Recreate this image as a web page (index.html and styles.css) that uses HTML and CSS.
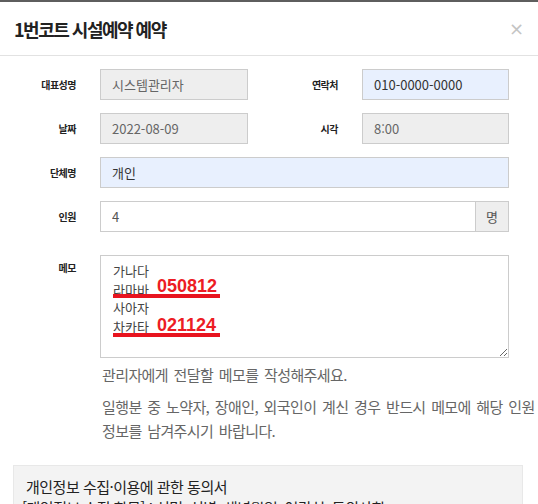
FILE: index.html
```html
<!DOCTYPE html>
<html lang="ko">
<head>
  <meta charset="UTF-8">
  <meta name="viewport" content="width=device-width, initial-scale=1.0">
  <title>1번코트 시설예약 예약</title>
  <link rel="stylesheet" href="styles.css">
</head>
<body>
  <div class="modal">
    <div class="modal-header">
      <h4 class="modal-title">1번코트 시설예약 예약</h4>
      <button class="close" type="button">&times;</button>
    </div>

    <div class="modal-body">
      <form class="form">
        <div class="row">
          <label class="label">대표성명</label>
          <input class="field" type="text" value="시스템관리자" readonly>
          <label class="label">연락처</label>
          <input class="field filled" type="text" value="010-0000-0000">
        </div>
        <div class="row">
          <label class="label">날짜</label>
          <input class="field" type="text" value="2022-08-09" readonly>
          <label class="label">시각</label>
          <input class="field" type="text" value="8:00" readonly>
        </div>
        <div class="row">
          <label class="label">단체명</label>
          <input class="field filled wide" type="text" value="개인">
        </div>
        <div class="row">
          <label class="label">인원</label>
          <div class="input-group wide">
            <input class="field" type="text" value="4">
            <span class="addon">명</span>
          </div>
        </div>
        <div class="row memo-row">
          <label class="label">메모</label>
          <div class="wide">
            <div class="memo-box">
              <textarea class="field memo">가나다
라마바
사아자
차카타</textarea>
              <!-- 빨간 표시 -->
              <span class="mark mark-1">050812</span>
              <span class="mark mark-2">021124</span>
            </div>
            <p class="help">관리자에게 전달할 메모를 작성해주세요.</p>
            <p class="help">일행분 중 노약자, 장애인, 외국인이 계신 경우 반드시 메모에 해당 인원 정보를 남겨주시기 바랍니다.</p>
          </div>
        </div>
      </form>

      <div class="agree">
        <p class="agree-title">개인정보 수집·이용에 관한 동의서</p>
        <p>[개인정보 수집 항목] : 성명, 성별, 생년월일, 연락처, 동의사항</p>
      </div>
    </div>
  </div>
</body>
</html>
```

FILE: styles.css
```css
body {
  margin: 0;
  font-family: "Noto Sans CJK KR", "Noto Sans", sans-serif;
  color: #333;
  background: #fff;
}
.modal {
  border-top: 2px solid #5e5e5e;
  overflow: hidden;
  height: 502px;
}
.modal-header {
  display: flex;
  align-items: center;
  justify-content: space-between;
  height: 53px;
  padding: 0 14px;
  border-bottom: 1px solid #e2e2e2;
}
.modal-title {
  margin: 0;
  font-size: 18px;
  font-weight: bold;
  letter-spacing: -1.5px;
  color: #222;
}
.close {
  border: none;
  background: none;
  padding: 0;
  font-size: 18px;
  font-family: "DejaVu Sans", sans-serif;
  color: #c4c4c4;
  cursor: pointer;
}
.modal-body {
  padding: 13px 15px 0 13px;
}
.form {
  padding-right: 14px;
}
.row {
  display: grid;
  grid-template-columns: 87px 148px 114px 1fr;
  align-items: center;
  margin-bottom: 13px;
}
.label {
  text-align: right;
  padding-right: 24px;
  font-size: 10px;
  font-weight: bold;
  letter-spacing: -0.5px;
  color: #222;
}
.field {
  box-sizing: border-box;
  height: 31px;
  width: 100%;
  padding: 0 11px;
  border: 1px solid #ccc;
  border-radius: 0;
  background: #fff;
  font-family: inherit;
  font-size: 13px;
  color: #555;
  outline: none;
}
.field[readonly] {
  background: #eee;
  color: #666;
}
.filled {
  background: #e8f0fe;
  color: #333;
}
.wide {
  grid-column: 2 / 5;
}
.input-group {
  display: flex;
}
.input-group .field {
  flex: 1;
}
.addon {
  box-sizing: border-box;
  width: 33px;
  height: 31px;
  display: flex;
  align-items: center;
  justify-content: center;
  border: 1px solid #ccc;
  border-left: none;
  background: #eee;
  font-size: 13px;
  color: #555;
}
.memo-row {
  align-items: start;
  margin-top: 23px;
}
.memo-row .label {
  padding-top: 5px;
}
.memo-box {
  position: relative;
}
.memo {
  display: block;
  height: 103px;
  padding: 6px 12px;
  line-height: 18.5px;
  resize: vertical;
  color: #444;
}
.mark {
  position: absolute;
  left: 13px;
  width: 107px;
  padding-left: 44px;
  box-sizing: border-box;
  border-bottom: 4px solid #e8141f;
  font-family: "Liberation Sans", Arial, sans-serif;
  font-weight: bold;
  font-size: 18px;
  line-height: 16px;
  color: #ed1c24;
}
.mark-1 {
  top: 23px;
}
.mark-2 {
  top: 62px;
}
.help {
  margin: 5px -28px 0 2px;
  font-size: 15px;
  line-height: 24px;
  letter-spacing: -0.6px;
  word-spacing: 2px;
  word-break: keep-all;
  color: #666;
}
.help + .help {
  margin-top: 8px;
}
.agree {
  margin-top: 22px;
  padding: 10px 8px;
  border: 1px solid #e8e8e8;
  background: #f3f3f3;
  font-size: 15px;
  line-height: 21px;
  letter-spacing: -0.5px;
  color: #222;
}
.agree p {
  margin: 0;
}
.agree .agree-title {
  padding-left: 4px;
}
```
